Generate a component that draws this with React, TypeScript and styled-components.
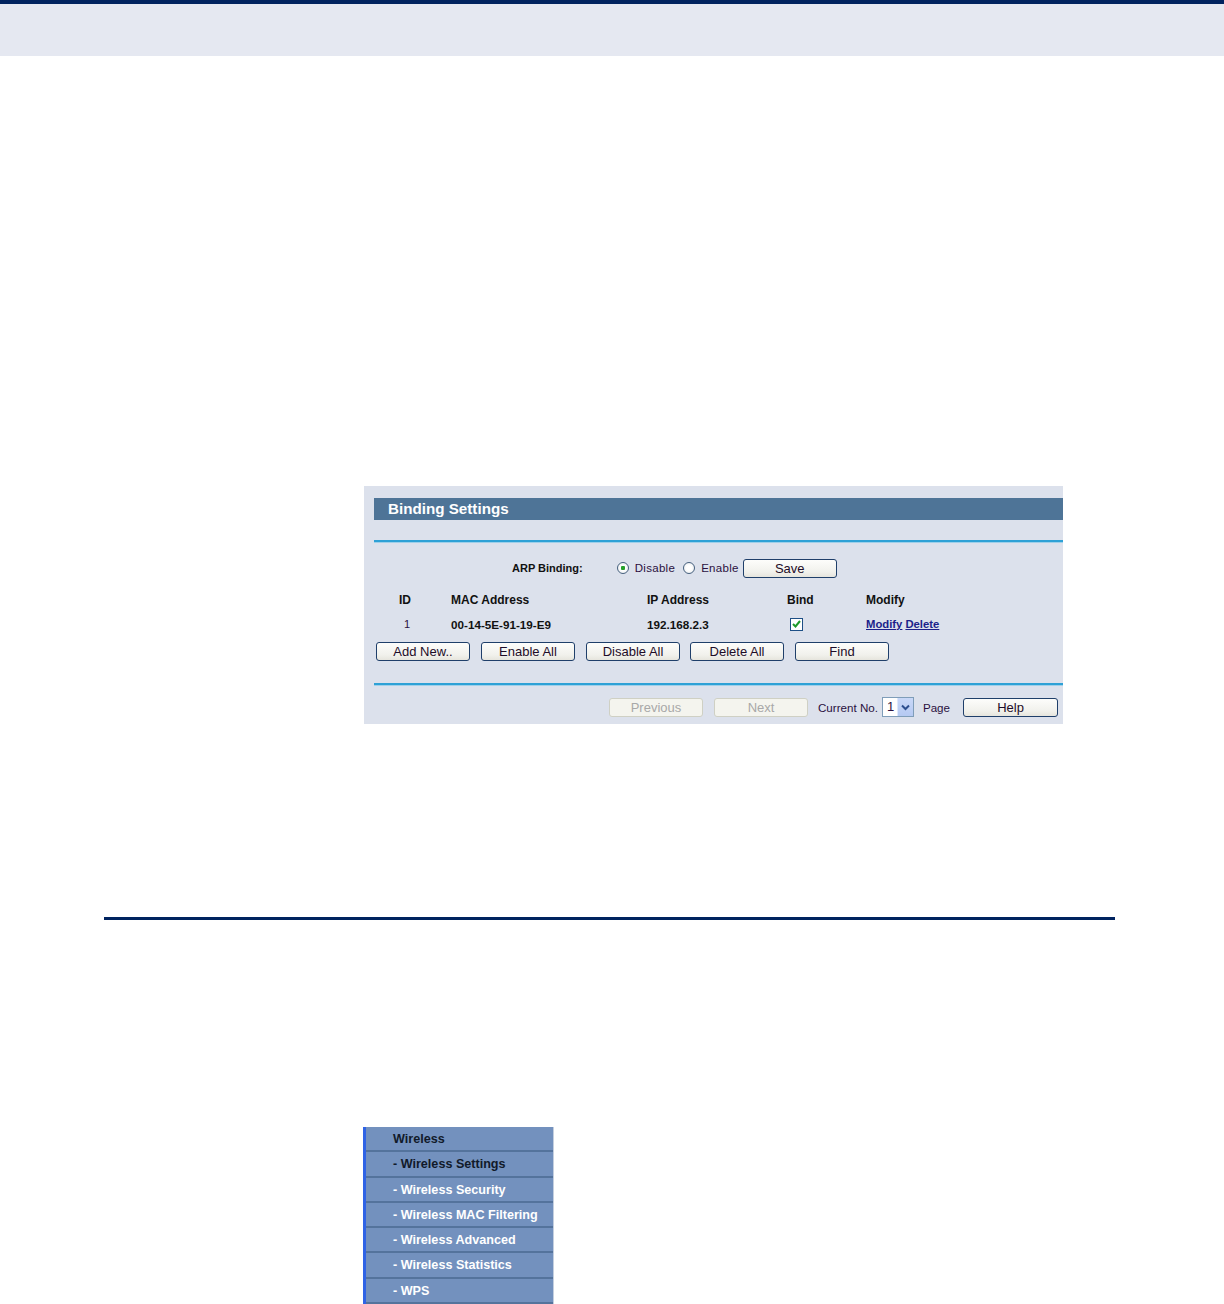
import React from "react";
import styled, { createGlobalStyle } from "styled-components";

const GlobalStyle = createGlobalStyle`
  html, body {
    margin: 0;
    padding: 0;
    background: #ffffff;
    font-family: "Liberation Sans", Arial, sans-serif;
  }
`;

const COLORS = {
  navy: "#00235f",
  headerBg: "#e5e8f1",
  panelBg: "#dce1ec",
  titleBar: "#4e7497",
  line: "#2ea1d6",
  btnBorder: "#1f3f6a",
  link: "#1b1f8a",
  menuBg: "#7391be",
  menuLine: "#54739c",
};

const Page = styled.div`
  width: 1224px;
  height: 1304px;
  overflow: hidden;
`;

const TopBar = styled.div`
  height: 52px;
  background: ${COLORS.headerBg};
  border-top: 4px solid ${COLORS.navy};
`;

const Panel = styled.div`
  box-sizing: border-box;
  margin: 430px 0 0 364px;
  width: 699px;
  height: 238px;
  padding: 12px 0 0 10px;
  background: ${COLORS.panelBg};
`;

const TitleBar = styled.div`
  height: 22px;
  line-height: 22px;
  padding-left: 14px;
  background: ${COLORS.titleBar};
  color: #ffffff;
  font-size: 15.2px;
  font-weight: bold;
`;

const Divider = styled.div<{ $top: number }>`
  margin-top: ${(p) => p.$top}px;
  height: 2px;
  background: ${COLORS.line};
  border-bottom: 1px solid #9fd0ea;
`;

const ArpRow = styled.div`
  display: flex;
  align-items: center;
  height: 20px;
  margin-top: 15px;
  padding-left: 138px;
  font-size: 11px;
`;

const ArpLabel = styled.span`
  font-weight: bold;
  margin-right: 34px;
  color: #111;
`;

const RadioLabel = styled.label<{ $after: number }>`
  display: flex;
  align-items: center;
  gap: 6px;
  margin-right: ${(p) => p.$after}px;
  font-size: 11.5px;
  letter-spacing: 0.3px;
  color: #2a1040;
`;

const RadioDot = styled.span<{ $checked?: boolean }>`
  box-sizing: border-box;
  width: 12px;
  height: 12px;
  border-radius: 50%;
  border: 1px solid #46607e;
  background: radial-gradient(circle, ${(p) => (p.$checked ? "#26a02c 0 2px" : "#ffffff 0 2px")}, #ffffff 2.5px, #e2e6ea 100%);
`;

const Btn = styled.button<{ $width?: number; $disabled?: boolean; $shift?: number }>`
  box-sizing: border-box;
  width: ${(p) => p.$width ?? 94}px;
  height: 19px;
  margin-left: ${(p) => p.$shift ?? 0}px;
  padding: 0;
  border-radius: 3px;
  border: 1px solid ${(p) => (p.$disabled ? "#cfd0c4" : COLORS.btnBorder)};
  background: ${(p) => (p.$disabled ? "#f4f4ee" : "linear-gradient(#fdfdfb, #f1f1ec 70%, #e6e5dd)")};
  color: ${(p) => (p.$disabled ? "#a8a8a8" : "#1e0c28")};
  font-family: "Liberation Sans", Arial, sans-serif;
  font-size: 13px;
  line-height: 17px;
`;

const Grid = styled.div`
  display: grid;
  grid-template-columns: 77px 196px 140px 79px 1fr;
  align-items: center;
`;

const HeadRow = styled(Grid)`
  height: 18px;
  margin-top: 13px;
  font-size: 12px;
  font-weight: bold;
  color: #111;
`;

const DataRow = styled(Grid)`
  height: 18px;
  margin-top: 6px;
  font-size: 11.7px;
  font-weight: bold;
  color: #111;
`;

const IdCell = styled.span`
  display: block;
  width: 30px;
  margin-left: 16px;
  text-align: center;
`;

const IdValue = styled.span`
  display: block;
  width: 30px;
  margin-left: 18px;
  text-align: center;
  font-size: 11px;
  font-weight: normal;
  color: #2a1040;
`;

const Check = styled.span`
  box-sizing: border-box;
  display: flex;
  align-items: center;
  justify-content: center;
  width: 13px;
  height: 13px;
  margin-left: 3px;
  border: 1px solid #1d4f86;
  background: #ffffff;
`;

const Links = styled.span`
  display: flex;
  gap: 3px;
  font-size: 11.3px;
`;

const Link = styled.a`
  color: ${COLORS.link};
  text-decoration: underline;
`;

const ButtonRow = styled.div`
  display: flex;
  gap: 11px;
  margin-top: 9px;
  padding-left: 2px;
`;

const BottomRow = styled.div`
  display: flex;
  align-items: center;
  justify-content: flex-end;
  height: 20px;
  margin-top: 11px;
  padding-right: 5px;
  font-size: 11.6px;
  color: #2a1040;
`;

const Spacer = styled.span<{ $w: number }>`
  display: inline-block;
  width: ${(p) => p.$w}px;
`;

const Select = styled.span`
  box-sizing: border-box;
  display: flex;
  width: 32px;
  height: 20px;
  margin-left: 4px;
  border: 1px solid #7f9db9;
  background: #ffffff;
`;

const SelectValue = styled.span`
  flex: 1;
  padding-left: 4px;
  line-height: 18px;
  font-size: 13px;
  color: #2a1040;
`;

const SelectArrow = styled.span`
  display: flex;
  align-items: center;
  justify-content: center;
  width: 15px;
  background: linear-gradient(#c9d8f8, #b5c9f2);
  border-left: 1px solid #dfe8fb;
`;

const Rule = styled.div`
  margin: 193px 0 0 104px;
  width: 1011px;
  height: 3px;
  background: ${COLORS.navy};
`;

const Menu = styled.div`
  box-sizing: border-box;
  margin: 207px 0 0 363px;
  width: 191px;
  border-left: 3px solid #2f63e6;
  border-right: 1px solid #c4cfdf;
  background: ${COLORS.menuBg};
`;

const MenuItem = styled.div<{ $dark?: boolean }>`
  box-sizing: border-box;
  height: 25.3px;
  padding-left: 27px;
  border-bottom: 2px solid ${COLORS.menuLine};
  line-height: 24px;
  font-size: 12.6px;
  font-weight: bold;
  color: ${(p) => (p.$dark ? "#111a2a" : "#ffffff")};
`;

const menuItems = [
  "- Wireless Settings",
  "- Wireless Security",
  "- Wireless MAC Filtering",
  "- Wireless Advanced",
  "- Wireless Statistics",
  "- WPS",
];

export default function App() {
  return (
    <Page>
      <GlobalStyle />
      <TopBar />
      <Panel>
        <TitleBar>Binding Settings</TitleBar>
        <Divider $top={20} />
        <ArpRow>
          <ArpLabel>ARP Binding:</ArpLabel>
          <RadioLabel $after={8}>
            <RadioDot $checked />
            Disable
          </RadioLabel>
          <RadioLabel $after={4}>
            <RadioDot />
            Enable
          </RadioLabel>
          <Btn>Save</Btn>
        </ArpRow>
        <HeadRow>
          <IdCell>ID</IdCell>
          <span>MAC Address</span>
          <span>IP Address</span>
          <span>Bind</span>
          <span>Modify</span>
        </HeadRow>
        <DataRow>
          <IdValue>1</IdValue>
          <span>00-14-5E-91-19-E9</span>
          <span>192.168.2.3</span>
          <Check>
            <svg width="9" height="8" viewBox="0 0 9 8">
              <path d="M1 4 L3.5 6.5 L8 1" fill="none" stroke="#1e9a2a" strokeWidth="2" />
            </svg>
          </Check>
          <Links>
            <Link href="#">Modify</Link>
            <Link href="#">Delete</Link>
          </Links>
        </DataRow>
        <ButtonRow>
          <Btn>Add New..</Btn>
          <Btn>Enable All</Btn>
          <Btn>Disable All</Btn>
          <Btn $shift={-1}>Delete All</Btn>
          <Btn>Find</Btn>
        </ButtonRow>
        <Divider $top={22} />
        <BottomRow>
          <Btn $disabled>Previous</Btn>
          <Spacer $w={11} />
          <Btn $disabled>Next</Btn>
          <Spacer $w={10} />
          <span>Current No.</span>
          <Select>
            <SelectValue>1</SelectValue>
            <SelectArrow>
              <svg width="9" height="7" viewBox="0 0 9 7">
                <path d="M1 1.5 L4.5 5 L8 1.5" fill="none" stroke="#2d4f8f" strokeWidth="2" />
              </svg>
            </SelectArrow>
          </Select>
          <Spacer $w={9} />
          <span>Page</span>
          <Spacer $w={13} />
          <Btn $width={95}>Help</Btn>
        </BottomRow>
      </Panel>
      <Rule />
      <Menu>
        <MenuItem $dark>Wireless</MenuItem>
        {menuItems.map((item, i) => (
          <MenuItem key={item} $dark={i === 0}>
            {item}
          </MenuItem>
        ))}
      </Menu>
    </Page>
  );
}
